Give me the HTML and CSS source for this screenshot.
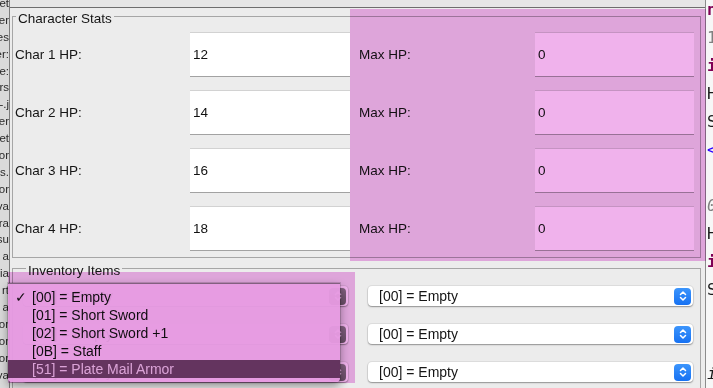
FILE: index.html
```html
<!DOCTYPE html>
<html lang="en">
<head>
    <meta charset="UTF-8">
    <meta name="viewport" content="width=device-width, initial-scale=1.0">
    <title>Character Editor</title>
    <link rel="stylesheet" href="styles.css">
</head>
<body>
    <div class="screen">
        <!-- project tree, cut off by the window -->
        <div class="tree">
            <div class="tree-list">
                <div class="tree-line"><span>et</span></div>
                <div class="tree-line"><span>er</span></div>
                <div class="tree-line"><span>es</span></div>
                <div class="tree-line"><span>er:</span></div>
                <div class="tree-line"><span>e:</span></div>
                <div class="tree-line"><span>rs</span></div>
                <div class="tree-line"><span>-.j</span></div>
                <div class="tree-line"><span>er</span></div>
                <div class="tree-line"><span>et</span></div>
                <div class="tree-line"><span>or</span></div>
                <div class="tree-line"><span>s.</span></div>
                <div class="tree-line"><span>or</span></div>
                <div class="tree-line"><span>va</span></div>
                <div class="tree-line"><span>ra</span></div>
                <div class="tree-line"><span>su</span></div>
                <div class="tree-line"><span>a</span></div>
                <div class="tree-line"><span>ia</span></div>
                <div class="tree-line"><span>rt</span></div>
                <div class="tree-line"><span>a</span></div>
                <div class="tree-line"><span>or</span></div>
                <div class="tree-line"><span>or</span></div>
                <div class="tree-line"><span>or</span></div>
                <div class="tree-line"><span>va</span></div>
            </div>
        </div>

        <div class="window">
            <div class="titlebar"></div>
            <div class="panel">
                <fieldset class="group stats">
                    <legend>Character Stats</legend>
                    <div class="stats-grid">
                        <label class="stat-label">Char 1 HP:</label>
                        <input class="stat-input" type="text" value="12">
                        <label class="stat-label max">Max HP:</label>
                        <input class="stat-input" type="text" value="0">

                        <label class="stat-label">Char 2 HP:</label>
                        <input class="stat-input" type="text" value="14">
                        <label class="stat-label max">Max HP:</label>
                        <input class="stat-input" type="text" value="0">

                        <label class="stat-label">Char 3 HP:</label>
                        <input class="stat-input" type="text" value="16">
                        <label class="stat-label max">Max HP:</label>
                        <input class="stat-input" type="text" value="0">

                        <label class="stat-label">Char 4 HP:</label>
                        <input class="stat-input" type="text" value="18">
                        <label class="stat-label max">Max HP:</label>
                        <input class="stat-input" type="text" value="0">
                    </div>
                </fieldset>

                <fieldset class="group inventory">
                    <legend>Inventory Items</legend>
                    <div class="inv-grid">
                        <div class="combo inactive"><span class="combo-text">[00] = Empty</span><span class="combo-btn"><svg width="8" height="12" viewBox="0 0 8 12"><path d="M1.5 4.5L4 2L6.5 4.5M1.5 7.5L4 10L6.5 7.5" fill="none" stroke="#fff" stroke-width="1.5" stroke-linecap="round" stroke-linejoin="round"/></svg></span></div>
                        <div class="combo"><span class="combo-text">[00] = Empty</span><span class="combo-btn"><svg width="8" height="12" viewBox="0 0 8 12"><path d="M1.5 4.5L4 2L6.5 4.5M1.5 7.5L4 10L6.5 7.5" fill="none" stroke="#fff" stroke-width="1.5" stroke-linecap="round" stroke-linejoin="round"/></svg></span></div>
                        <div class="combo inactive"><span class="combo-text">[00] = Empty</span><span class="combo-btn"><svg width="8" height="12" viewBox="0 0 8 12"><path d="M1.5 4.5L4 2L6.5 4.5M1.5 7.5L4 10L6.5 7.5" fill="none" stroke="#fff" stroke-width="1.5" stroke-linecap="round" stroke-linejoin="round"/></svg></span></div>
                        <div class="combo"><span class="combo-text">[00] = Empty</span><span class="combo-btn"><svg width="8" height="12" viewBox="0 0 8 12"><path d="M1.5 4.5L4 2L6.5 4.5M1.5 7.5L4 10L6.5 7.5" fill="none" stroke="#fff" stroke-width="1.5" stroke-linecap="round" stroke-linejoin="round"/></svg></span></div>
                        <div class="combo inactive"><span class="combo-text">[00] = Empty</span><span class="combo-btn"><svg width="8" height="12" viewBox="0 0 8 12"><path d="M1.5 4.5L4 2L6.5 4.5M1.5 7.5L4 10L6.5 7.5" fill="none" stroke="#fff" stroke-width="1.5" stroke-linecap="round" stroke-linejoin="round"/></svg></span></div>
                        <div class="combo"><span class="combo-text">[00] = Empty</span><span class="combo-btn"><svg width="8" height="12" viewBox="0 0 8 12"><path d="M1.5 4.5L4 2L6.5 4.5M1.5 7.5L4 10L6.5 7.5" fill="none" stroke="#fff" stroke-width="1.5" stroke-linecap="round" stroke-linejoin="round"/></svg></span></div>
                    </div>
                </fieldset>
            </div>
        </div>

        <!-- editor behind the window, cut off -->
        <div class="code">
            <div class="code-lines">
                <div class="code-line kw">n</div>
                <div class="code-line num">1</div>
                <div class="code-line kw">i</div>
                <div class="code-line">H</div>
                <div class="code-line">S</div>
                <div class="code-line str">&lt;</div>
                <div class="code-line">&nbsp;</div>
                <div class="code-line num it">0</div>
                <div class="code-line">H</div>
                <div class="code-line kw">i</div>
                <div class="code-line">S</div>
                <div class="code-line">&nbsp;</div>
                <div class="code-line">&nbsp;</div>
                <div class="code-line it">i</div>
            </div>
        </div>

        <!-- open combo box menu -->
        <div class="popup">
            <div class="menu-item"><span class="check">✓</span>[00] = Empty</div>
            <div class="menu-item"><span class="check"></span>[01] = Short Sword</div>
            <div class="menu-item"><span class="check"></span>[02] = Short Sword +1</div>
            <div class="menu-item"><span class="check"></span>[0B] = Staff</div>
            <div class="menu-item selected"><span class="check"></span>[51] = Plate Mail Armor</div>
        </div>

        <!-- inspector highlight boxes -->
        <div class="highlight hl-stats"></div>
        <div class="highlight hl-popup"></div>
    </div>
</body>
</html>
```

FILE: styles.css
```css
* { box-sizing: border-box; }
body { margin: 0; width: 713px; height: 388px; overflow: hidden; font-family: "Liberation Sans", Arial, sans-serif; font-size: 13.5px; color: #151515; background: #ececec; }

.screen { position: relative; display: flex; height: 388px; }

/* left project tree */
.tree { width: 10px; flex: none; background: #dadada; border-right: 1px solid #7c7c7c; overflow: hidden; font-size: 11.5px; color: #2a2a2a; }
.tree-list { margin-top: -5px; }
.tree-line { height: 16.9px; line-height: 16.9px; display: flex; justify-content: flex-end; white-space: nowrap; }

/* window */
.window { width: 695px; flex: none; display: flex; flex-direction: column; }
.titlebar { height: 8px; flex: none; background: #e6e6e6; border-bottom: 1px solid #6e6e6e; }
.panel { flex: 1; padding: 0 4px 0 2px; background: #ececec; }

.group { margin: 0; padding: 6px 0; border: 1px solid #a6a6a6; min-width: 0; }
.group legend { margin-left: 3px; padding: 5px 2px 0; line-height: 15px; font-size: 13.5px; }
.stats { margin-top: -2px; }

.stats-grid { display: grid; grid-template-columns: 177px 160px 185px 159px; row-gap: 13px; align-items: center; }
.stat-label { padding-left: 2px; }
.stat-label.max { padding-left: 9px; }
.stat-input { height: 45px; width: 100%; margin: 0; padding: 0 3px; border: none; border-top: 1px solid #d2d2d2; border-bottom: 1px solid #a2a2a2; background: #fff; font: inherit; color: #111; outline: none; }

.inventory { padding: 8px 7px 20px 10px; }
.inv-grid { display: grid; grid-template-columns: 1fr 1fr; column-gap: 20px; row-gap: 18px; }

.combo { height: 20px; display: flex; align-items: center; padding-left: 11px; background: #fff; border-radius: 4px; box-shadow: 0 0 0 1px rgba(0, 0, 0, 0.06), 0 1px 1.5px rgba(0, 0, 0, 0.35); }
.combo-text { flex: 1; font-size: 14px; }
.combo-btn { width: 17px; height: 17px; margin-right: 2px; border-radius: 4px; background: linear-gradient(#3c95fc, #1671f2); display: flex; align-items: center; justify-content: center; }
.combo.inactive .combo-btn { background: linear-gradient(#8a8a8a, #6e6e6e); }

/* editor on the right */
.code { width: 8px; flex: none; border-left: 1px solid #8c8c8c; background: #f7f7f7; overflow: hidden; font-family: "DejaVu Sans Mono", monospace; font-size: 16px; color: #1a1a1a; }
.code-lines { margin-top: -4px; padding-left: 1px; }
.code-line { height: 28px; line-height: 28px; white-space: nowrap; }
.kw { color: #7f0055; font-weight: bold; }
.num { color: #808080; }
.str { color: #2a00ff; }
.it { font-style: italic; }

/* popup menu of the first combo */
.popup { position: absolute; left: 8px; top: 283px; width: 332px; padding: 4px 0; background: rgba(246, 222, 244, 0.95); border-top: 1px solid #8a8a8a; border-radius: 0 0 4px 4px; box-shadow: 0 4px 10px rgba(0, 0, 0, 0.4), 0 0 0 1px rgba(0, 0, 0, 0.15); font-size: 14px; color: #111; }
.menu-item { display: flex; height: 18px; line-height: 18px; white-space: nowrap; }
.check { width: 24px; padding-left: 7px; flex: none; }
.menu-item.selected { background: #6a4a66; color: #e8e8e8; }

/* pink inspector boxes */
.highlight { position: absolute; background: #f0b2ec; mix-blend-mode: multiply; pointer-events: none; }
.hl-stats { left: 350px; top: 9px; width: 356px; height: 252px; }
.hl-popup { left: 8px; top: 272px; width: 347px; height: 111px; }
```
